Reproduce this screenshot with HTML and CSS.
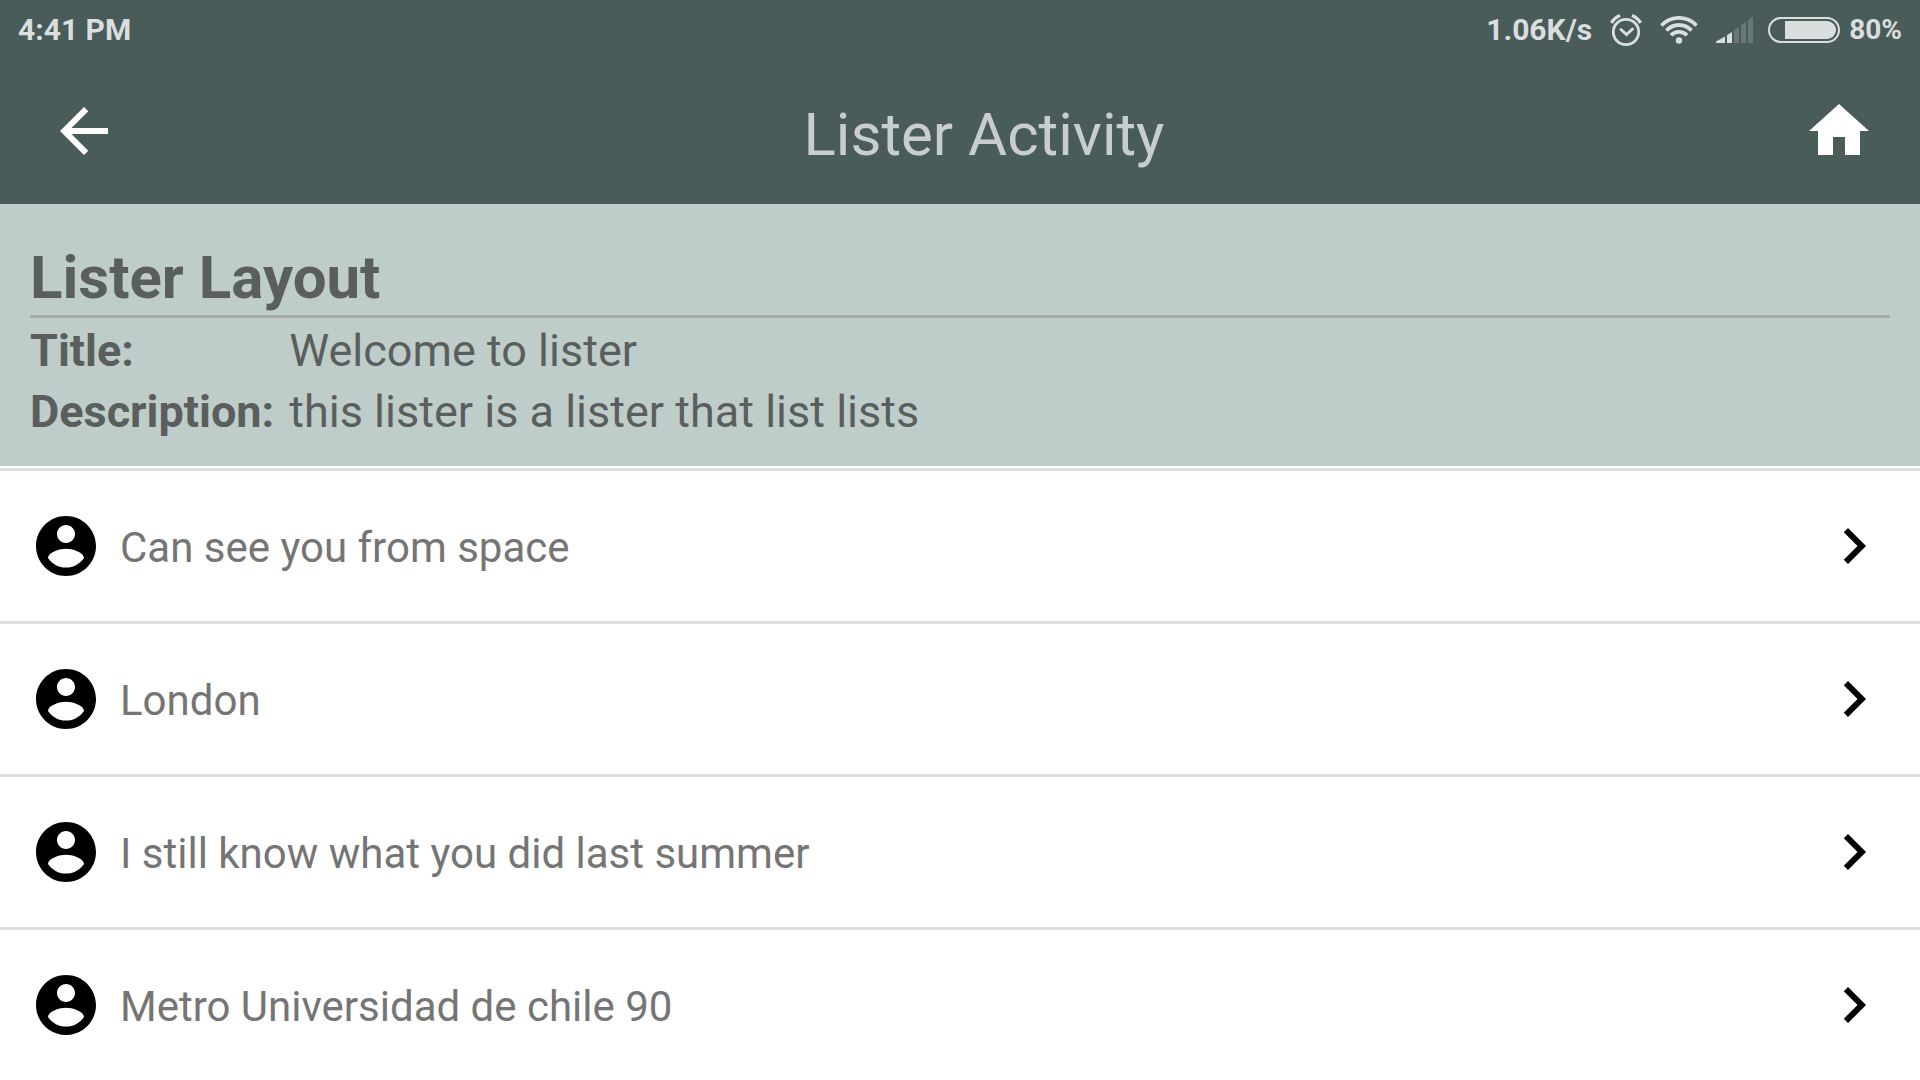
FILE: index.html
```html
<!DOCTYPE html>
<html lang="en">
<head>
<meta charset="utf-8">
<meta name="viewport" content="width=device-width, initial-scale=1">
<title>Lister Activity</title>
<link rel="stylesheet" href="styles.css">
</head>
<body>
<svg class="sprite" aria-hidden="true">
  <symbol id="account" viewBox="0 0 24 24"><path d="M12 2C6.48 2 2 6.48 2 12s4.48 10 10 10 10-4.48 10-10S17.52 2 12 2zm0 3c1.66 0 3 1.34 3 3s-1.34 3-3 3-3-1.34-3-3 1.34-3 3-3zm0 14.2c-2.500 0-4.710-1.280-6-3.220.030-1.990 4-3.080 6-3.080 1.990 0 5.970 1.090 6 3.080-1.290 1.940-3.500 3.220-6 3.220z"/></symbol>
  <symbol id="chevron" viewBox="0 0 24 24"><path d="M10 6L8.590 7.410 13.170 12l-4.580 4.590L10 18l6-6z"/></symbol>
</svg>

<header class="app-header">
  <div class="status-bar">
    <span>4:41 PM</span>
    <div class="status-icons">
      <div class="network">
        <span>1.06K/s</span>
        <svg width="32" height="34" viewBox="0 0 32 34" fill="none" stroke="currentColor" aria-hidden="true">
          <circle cx="16" cy="19" r="12.700" stroke-width="2.800"/>
          <path d="M1.500 10Q4 5 10 2.500M30.500 10Q28 5 22 2.500" stroke-width="3.400"/>
          <path d="M11 16.500l5.500 5 6-5.500" stroke-width="3" stroke-linecap="round"/>
        </svg>
        <svg width="38" height="28" viewBox="0 0 38 28" fill="none" stroke="currentColor" stroke-width="3.800" aria-hidden="true">
          <path d="M1.500 9.500A23.900 23.900 0 0 1 36.500 9.500"/>
          <path d="M6.500 14.500A17 17 0 0 1 31.500 14.500"/>
          <path d="M11 19.300A10.900 10.900 0 0 1 27 19.300"/>
          <circle cx="19" cy="24.500" r="3.200" fill="currentColor" stroke="none"/>
        </svg>
        <svg width="37" height="26" viewBox="0 0 37 26" fill="currentColor" aria-hidden="true">
          <path d="M0 26v-1.500L9 19.500V26zM11 26v-8l5-3v11z"/>
          <path opacity=".22" d="M18 26V13l5-3v16zM25 26V8l5-3.500V26zM32 26V3l5-3v26z"/>
        </svg>
      </div>
      <div class="battery">
        <svg width="72" height="26" viewBox="0 0 72 26" aria-hidden="true">
          <rect x="1" y="1" width="70" height="24" rx="12" fill="none" stroke="currentColor" stroke-width="2"/>
          <path d="M17 4h42a9 9 0 0 1 0 18H17z" fill="currentColor"/>
        </svg>
        <span>80%</span>
      </div>
    </div>
  </div>
  <div class="toolbar">
    <button class="back" type="button" aria-label="Back">
      <svg class="icon" viewBox="0 0 24 24" aria-hidden="true"><path d="M20 11H7.830l5.590-5.590L12 4l-8 8 8 8 1.410-1.410L7.830 13H20v-2z"/></svg>
    </button>
    <h1>Lister Activity</h1>
    <button class="home" type="button" aria-label="Home">
      <svg class="icon" viewBox="0 0 24 24" aria-hidden="true"><path d="M10 20v-6h4v6h5v-8h3L12 3 2 12h3v8z"/></svg>
    </button>
  </div>
</header>

<main>
  <section class="info">
    <h2>Lister Layout</h2>
    <dl>
      <dt>Title:</dt>
      <dd>Welcome to lister</dd>
      <dt>Description:</dt>
      <dd>this lister is a lister that list lists</dd>
    </dl>
  </section>
  <ul class="list">
    <li><a href="#space"><svg class="icon"><use href="#account"/></svg><span>Can see you from space</span><svg class="icon"><use href="#chevron"/></svg></a></li>
    <li><a href="#london"><svg class="icon"><use href="#account"/></svg><span>London</span><svg class="icon"><use href="#chevron"/></svg></a></li>
    <li><a href="#summer"><svg class="icon"><use href="#account"/></svg><span>I still know what you did last summer</span><svg class="icon"><use href="#chevron"/></svg></a></li>
    <li><a href="#metro"><svg class="icon"><use href="#account"/></svg><span>Metro Universidad de chile 90</span><svg class="icon"><use href="#chevron"/></svg></a></li>
  </ul>
</main>
</body>
</html>
```
FILE: styles.css
```css
* {
  box-sizing: border-box;
}

body,
h1,
h2,
dl,
dd,
ul {
  margin: 0;
  padding: 0;
}

body {
  background: #fff;
  font-family: Roboto, sans-serif;
}

.sprite {
  display: none;
}

.icon {
  display: block;
  flex: none;
  width: 72px;
  height: 72px;
  fill: currentColor;
}

.app-header {
  background: #495c5a;
  color: #dbdede;
}

.status-bar {
  display: flex;
  align-items: center;
  justify-content: space-between;
  height: 60px;
  padding: 0 18px;
  font-size: 30px;
  font-weight: 700;
  line-height: 36px;
}

.status-icons {
  display: flex;
  align-items: center;
  gap: 15px;
}

.network {
  display: flex;
  align-items: center;
  gap: 18px;
}

.battery {
  display: flex;
  align-items: center;
  gap: 9px;
  font-size: 28px;
}

.toolbar {
  display: flex;
  align-items: center;
  height: 144px;
  padding-bottom: 2px;
}

.toolbar button {
  border: 0;
  background: none;
  color: #fff;
}

.toolbar .back {
  padding: 0 45px 0 48px;
}

.toolbar .home {
  padding: 0 45px 0 0;
}

.toolbar h1 {
  flex: 1;
  padding-top: 8px;
  color: #c8cdcd;
  font-size: 60px;
  font-weight: 400;
  line-height: 72px;
  text-align: center;
}

.info {
  padding: 40px 30px 24px;
  background: #bfcdca;
  color: #5a5f5e;
}

.info h2 {
  padding-bottom: 3px;
  border-bottom: 3px solid #a9a9a9;
  font-size: 60px;
  font-weight: 700;
  line-height: 68px;
}

.info dl {
  display: grid;
  grid-template-columns: max-content 1fr;
  column-gap: 15px;
  padding-top: 2px;
  font-size: 45px;
  line-height: 61px;
}

.info dt {
  font-weight: 700;
}

.list {
  padding-top: 2px;
  list-style: none;
}

.list li {
  border-top: 3px solid #e0e0e0;
}

.list a {
  display: flex;
  align-items: center;
  gap: 18px;
  height: 150px;
  padding: 0 30px;
  color: #000;
  text-decoration: none;
}

.list span {
  flex: 1;
  padding-top: 4px;
  color: #757575;
  font-size: 42px;
  line-height: 50px;
}
```
